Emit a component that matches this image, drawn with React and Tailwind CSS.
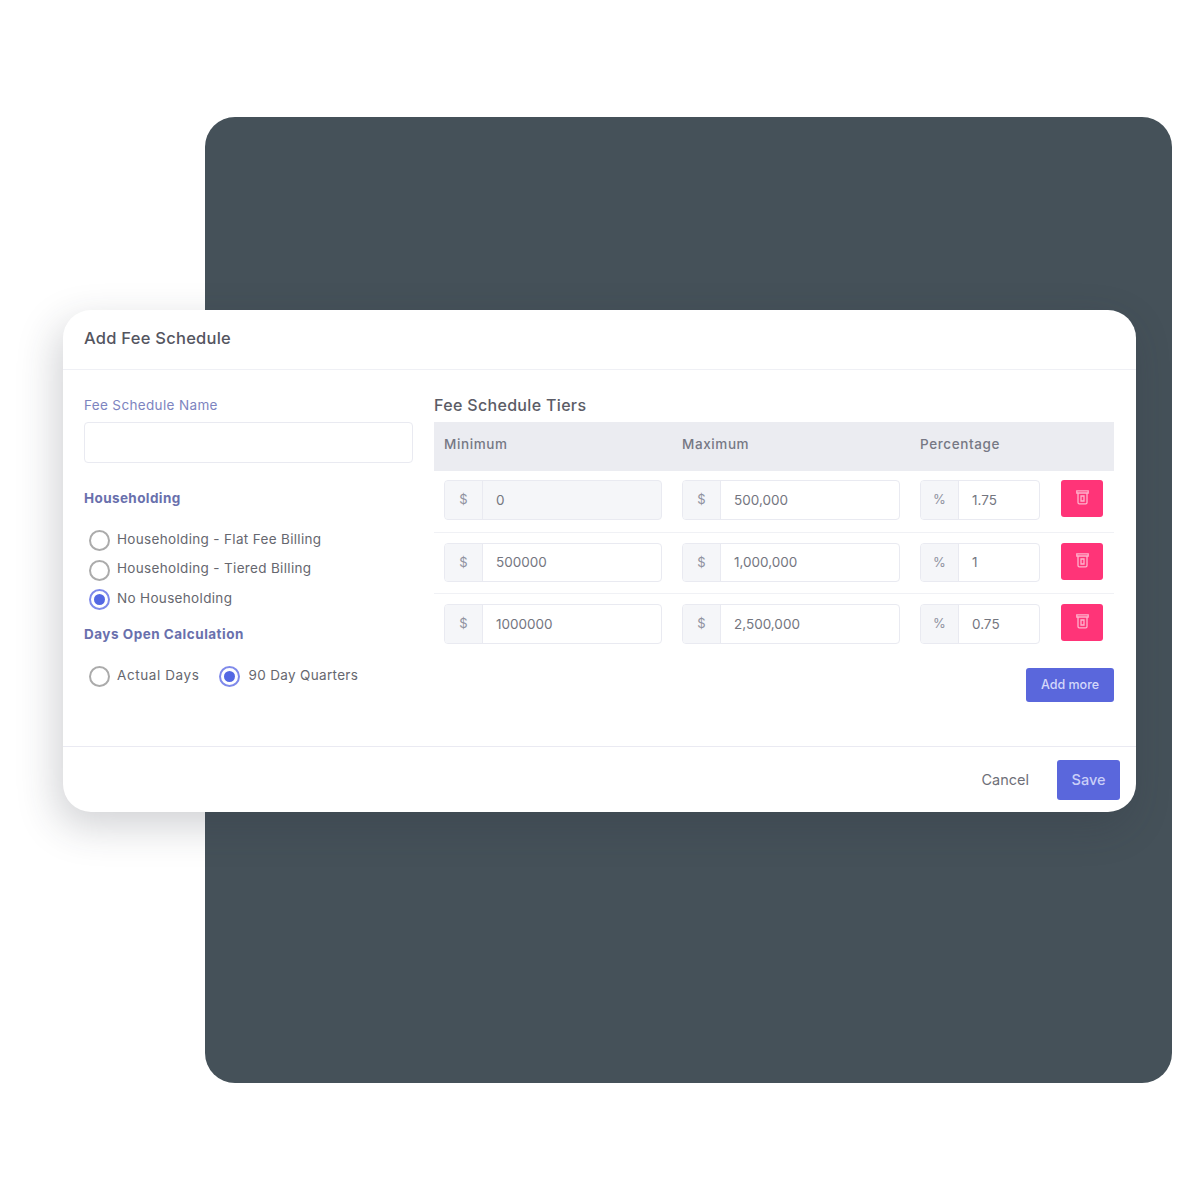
import React from 'react';

const tiers = [
  { min: '0', max: '500,000', pct: '1.75', disabled: true, row: 'h-[62px] pt-[9px] pb-[12px] border-b border-[#f0f1f5]' },
  { min: '500000', max: '1,000,000', pct: '1', row: 'h-[61px] pt-[10px] pb-[11px] border-b border-[#f0f1f5]' },
  { min: '1000000', max: '2,500,000', pct: '0.75', row: 'h-[50px] pt-[10px]' },
];

function TrashIcon() {
  return (
    <svg className="-mt-[3px]" width="13" height="15" viewBox="0 0 13 15" fill="none" stroke="#ffb3cc" strokeWidth="1.3">
      <path d="M.8.8h11.4v2.2H.8z" />
      <path d="M2 3v9.6c0 .8.5 1.3 1.3 1.3h6.4c.8 0 1.3-.5 1.3-1.3V3" />
      <path d="M5 6h3v5H5z" />
    </svg>
  );
}

function Radio({ checked }) {
  return (
    <span className={`flex h-[21px] w-[21px] shrink-0 items-center justify-center rounded-full border-2 bg-white ${checked ? 'border-[#7f8aea]' : 'border-[#ababab]'}`}>
      {checked && <span className="h-[11px] w-[11px] rounded-full bg-[#5468e3]" />}
    </span>
  );
}

function AddonInput({ symbol, value, disabled, width }) {
  return (
    <div className={`flex h-full shrink-0 overflow-hidden rounded border border-[#e9eaf1] ${width} ${disabled ? 'bg-[#f5f6f9]' : 'bg-white'}`}>
      <span className="flex w-[38px] items-center justify-center border-r border-[#e9eaf1] bg-[#f5f6f9] text-[13px] text-[#8f929f]">{symbol}</span>
      <span className="flex items-center pl-[13px] text-[13.5px] text-[#74767f]">{value}</span>
    </div>
  );
}

export default function App() {
  return (
    <div className="relative h-[1200px] w-[1200px] overflow-hidden bg-white font-['Inter','Liberation_Sans',sans-serif]">
      <div className="ml-[205px] mt-[117px] h-[966px] w-[967px] rounded-[30px] bg-[#455159]" />

      <div className="absolute left-[63px] top-[310px] flex h-[502px] w-[1073px] flex-col rounded-[28px] bg-white shadow-[-6px_14px_40px_rgba(40,45,60,0.22)]">
        <div className="flex h-[60px] shrink-0 items-center border-b border-[#eff0f5] px-[21px] pb-[3px]">
          <h1 className="text-[16.5px] font-medium tracking-[0.25px] text-[#54555f]">Add Fee Schedule</h1>
        </div>

        <div className="flex flex-1 gap-[21px] px-[21px]">
          <div className="w-[329px] shrink-0 pt-[26px]">
            <label className="block text-[13.5px] leading-[18px] tracking-[0.35px] text-[#7d84c0]">Fee Schedule Name</label>
            <div className="mt-[8px] h-[41px] rounded border border-[#e9eaf1] bg-white" />

            <h2 className="mt-[26px] text-[13.5px] font-bold leading-[18px] tracking-[0.4px] text-[#6970ad]">Householding</h2>
            <div className="mt-[23px] flex flex-col gap-[8.5px] pl-[5px] text-[13.5px] tracking-[0.33px] text-[#66676f]">
              <div className="flex items-center gap-[7px]"><Radio /><span className="-mt-[2px]">Householding - Flat Fee Billing</span></div>
              <div className="flex items-center gap-[7px]"><Radio /><span className="-mt-[3px]">Householding - Tiered Billing</span></div>
              <div className="flex items-center gap-[7px]"><Radio checked /><span className="-mt-[2px]">No Householding</span></div>
            </div>

            <h2 className="mt-[15px] text-[13.5px] font-bold leading-[18px] tracking-[0.5px] text-[#6970ad]">Days Open Calculation</h2>
            <div className="mt-[23px] flex items-center gap-[19px] pl-[5px] text-[13.5px] tracking-[0.33px] text-[#66676f]">
              <div className="flex items-center gap-[7px]"><Radio /><span className="-mt-[2px] tracking-[0.6px]">Actual Days</span></div>
              <div className="flex items-center gap-[9px]"><Radio checked /><span className="-mt-[2px]">90 Day Quarters</span></div>
            </div>
          </div>

          <div className="w-[680px] shrink-0 pt-[25px]">
            <h2 className="text-[16px] font-medium leading-[20px] tracking-[0.33px] text-[#5b5c66]">Fee Schedule Tiers</h2>
            <div className="mt-[7px] flex h-[49px] items-center bg-[#ebecf1] pb-[4px] pl-[10px] text-[13.5px] font-medium tracking-[0.6px] text-[#767884]">
              <span className="w-[238px]">Minimum</span>
              <span className="w-[238px]">Maximum</span>
              <span>Percentage</span>
            </div>

            {tiers.map((tier) => (
              <div key={tier.min} className={`px-[10px] ${tier.row}`}>
                <div className="flex h-full gap-[20px]">
                  <AddonInput symbol="$" value={tier.min} disabled={tier.disabled} width="w-[218px]" />
                  <AddonInput symbol="$" value={tier.max} width="w-[218px]" />
                  <AddonInput symbol="%" value={tier.pct} width="w-[120px]" />
                  <button className="ml-px flex h-[37px] w-[42px] items-center justify-center rounded-[3px] bg-[#ff3478]"><TrashIcon /></button>
                </div>
              </div>
            ))}

            <div className="mt-[24px] flex justify-end">
              <button className="h-[34px] w-[88px] rounded-[3px] bg-[#5a67dc] text-[12.5px] font-medium text-[#d4d8fa]">Add more</button>
            </div>
          </div>
        </div>

        <div className="flex h-[66px] shrink-0 items-center justify-end gap-[28px] border-t border-[#eaeaf2] pr-[16px]">
          <span className="text-[14.5px] text-[#6e6f78]">Cancel</span>
          <button className="h-[40px] w-[63px] rounded-[3px] bg-[#5a67dc] text-[14.5px] font-medium text-[#c9cef8]">Save</button>
        </div>
      </div>
    </div>
  );
}
